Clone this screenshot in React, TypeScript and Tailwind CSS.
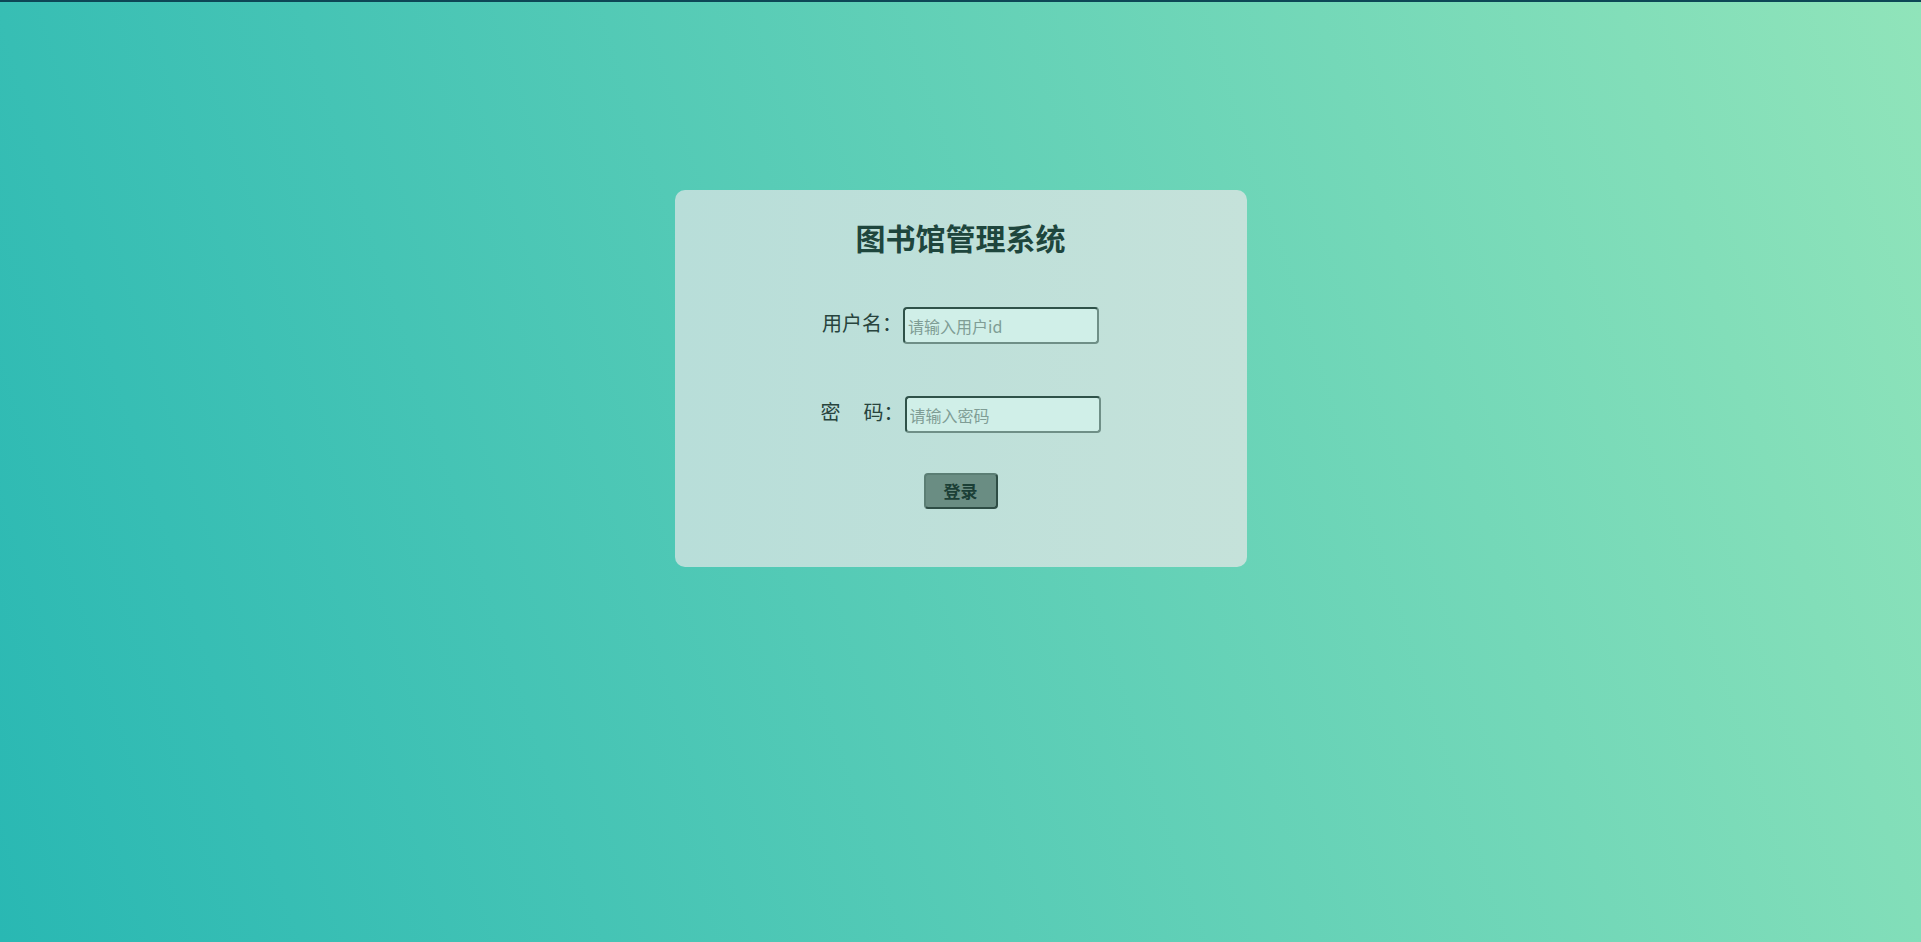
import { useState } from "react";

function App() {
  const [userId, setUserId] = useState("");
  const [password, setPassword] = useState("");

  return (
    <main
      className="min-h-[942px] w-full border-t-2 border-[#0d4756] bg-[linear-gradient(72deg,#29b8b3,#90e4ba)] pt-[188px]"
      style={{ fontFamily: '"Noto Sans CJK SC", "Noto Sans", sans-serif' }}
    >
      <div className="mx-auto flex h-[377px] w-[572px] flex-col items-center rounded-[10px] bg-gradient-to-r from-[#b8ded9] to-[#c5e2da]">
        <h1 className="mt-[27px] text-[30px] font-bold leading-[40px] text-[#1e463d]">
          图书馆管理系统
        </h1>

        {/* 用户名 */}
        <div className="mt-[50px] flex items-center gap-[1px] text-[20px] text-[#28443d]">
          <label className="pb-[5px] leading-none">用户名：</label>
          <input
            value={userId}
            onChange={(e) => setUserId(e.target.value)}
            placeholder="请输入用户id"
            className="h-[37px] w-[196px] rounded-[4px] border-2 border-t-[#2f5249] border-l-[#2f5249] border-b-[#6f8f87] border-r-[#6f8f87] bg-[#d0efe8] px-[3px] text-[16px] text-[#1e463d] outline-none placeholder:text-[#7f9d95]"
          />
        </div>

        {/* 密码 */}
        <div className="mt-[52px] flex items-center gap-[1px] text-[20px] text-[#28443d]">
          <label className="flex pb-[5px] leading-none">
            <span>密</span>
            <span className="inline-block w-[23px]" />
            <span>码：</span>
          </label>
          <input
            type="password"
            value={password}
            onChange={(e) => setPassword(e.target.value)}
            placeholder="请输入密码"
            className="h-[37px] w-[196px] rounded-[4px] border-2 border-t-[#2f5249] border-l-[#2f5249] border-b-[#6f8f87] border-r-[#6f8f87] bg-[#d0efe8] px-[3px] text-[16px] text-[#1e463d] outline-none placeholder:text-[#7f9d95]"
          />
        </div>

        <button className="mt-[40px] h-[36px] w-[74px] rounded-[4px] border-2 border-t-[#5b7e74] border-l-[#5b7e74] border-b-[#2e4d45] border-r-[#2e4d45] bg-[#6a8d83] text-[17px] font-bold text-[#1b3f36]">
          登录
        </button>
      </div>
    </main>
  );
}

export default App;
